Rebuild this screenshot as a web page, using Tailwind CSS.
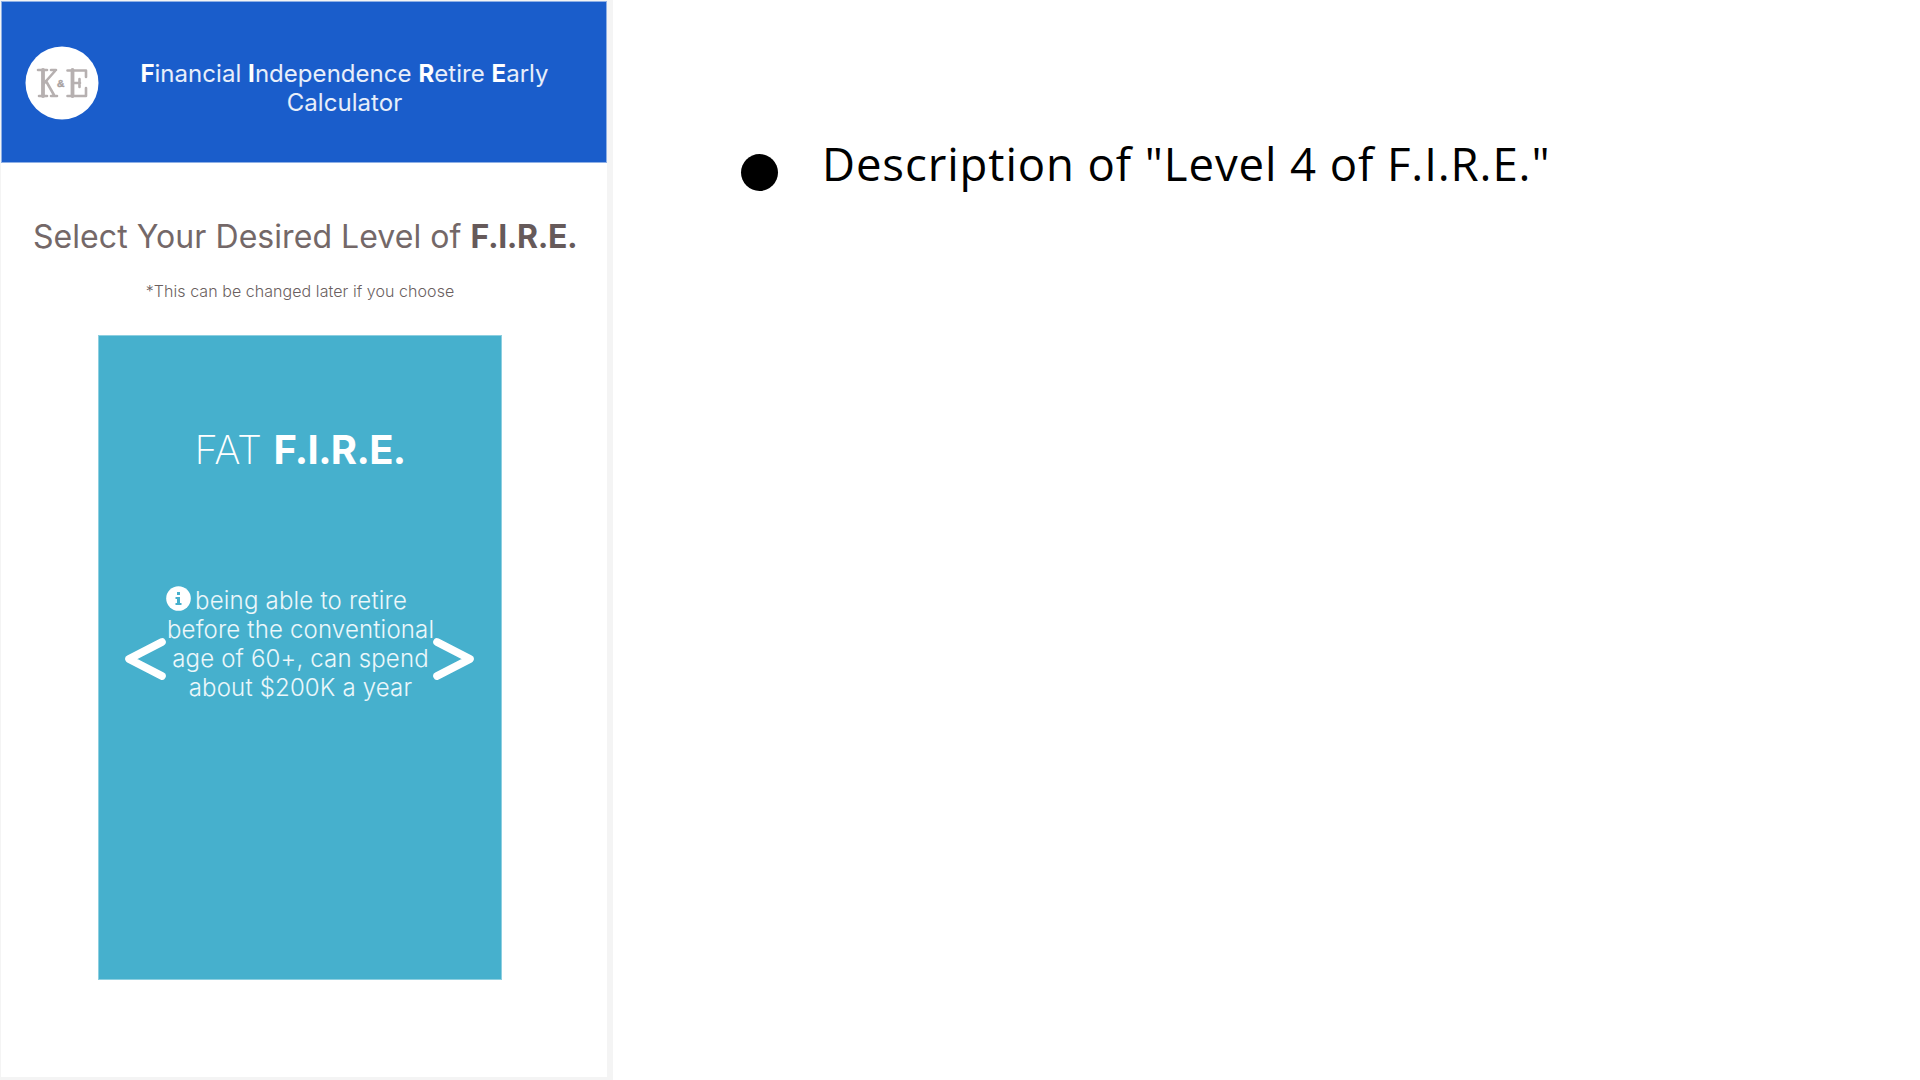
<!DOCTYPE html>
<html lang="en"><head><meta charset="utf-8"><title>Financial Independence Retire Early Calculator</title>
<script src="https://cdn.jsdelivr.net/npm/@tailwindcss/browser@4"></script></head>
<body class="bg-white font-['Inter',sans-serif] h-[1080px] w-[1920px] overflow-hidden flex">
<section class="w-[613px] h-[1080px] shrink-0 bg-[#f4f4f4] pt-px pl-px">
  <div class="w-[606px] h-[1076px] bg-white flex flex-col">
    <header class="h-[162px] shrink-0 bg-[#1a5dcb] border border-[#8fb0e6] flex items-start">
      <svg class="w-[74px] h-[74px] mt-[44px] ml-[23px] shrink-0" viewBox="0 0 74 74">
        <circle cx="37" cy="37" r="36.5" fill="#fff"/>
        <g fill="none" stroke="#b6b0b0" stroke-width="2.6" stroke-linecap="round" stroke-linejoin="round">
          <path stroke-width="3.8" d="M18 24v26M47.500 24v26"/>
          <path d="M13 24h9M14 50h8M26 24h5M26 50h6M30 25L18.500 38M21 35l8 14"/>
          <path d="M42.500 24.500h18.500v6.500M42.500 50h18.500v-8M48 37h7M54.500 33v8"/>
        </g>
        <text x="32.3" y="41.300" font-size="11.5" font-weight="700" fill="#a8a1a1" stroke="#a8a1a1" stroke-width=".4" font-family="Liberation Mono, monospace">&amp;</text>
      </svg>
      <h1 class="mt-[57px] ml-[17px] w-[457px] text-center text-[24px] leading-[29px] tracking-[0.04px] text-white/90 font-normal"><b class="text-white">F</b>inancial <b class="text-white">I</b>ndependence <b class="text-white">R</b>etire <b class="text-white">E</b>arly<br>Calculator</h1>
    </header>
    <h2 class="mt-[54px] ml-[32px] text-[32px] leading-[39px] tracking-[0.06px] text-[#746868] whitespace-nowrap">Select Your Desired Level of <b class="text-[#665a5a] tracking-[-0.4px]">F.I.R.E.</b></h2>
    <p class="mt-[25px] w-[598px] text-center text-[16px] leading-[20px] tracking-[0.06px] font-light text-[#6b5f5f]">*This can be changed later if you choose</p>
    <article class="mt-[34px] ml-[97px] w-[404px] h-[645px] bg-[#46b0cd] border border-[#8dcfe0] text-white flex flex-col items-center">
      <h3 class="mt-[90px] text-[40px] leading-[48px] font-extralight">FAT <b class="font-bold tracking-[-0.65px]">F.I.R.E.</b></h3>
      <div class="mt-[112px] flex text-[24px] leading-[29px] font-light tracking-[0.17px]">
        <svg class="w-[42px] h-[42px] mt-[52px] -ml-px shrink-0" viewBox="0 0 42 42"><path d="M38 4L5 21l33 17" fill="none" stroke="#fff" stroke-width="7.600" stroke-linecap="round" stroke-linejoin="round"/></svg>
        <div class="w-[268px] text-center whitespace-nowrap text-white/90">
          <div class="flex items-start">
            <svg class="w-[25px] h-[25px] shrink-0" viewBox="0 0 25 25"><circle cx="12.5" cy="12.5" r="12.3" fill="#fff"/><path d="M11 6h3v3h-3zM9.5 11H14v6h1.5v2h-6v-2H11v-4H9.500z" fill="#46b0cd"/></svg>
            <span class="ml-[4px] tracking-[0.2px]">being able to retire</span>
          </div>
          <div class="pl-px">before the conventional<br>age of 60+, can spend<br>about $200K a year</div>
        </div>
        <svg class="w-[42px] h-[42px] mt-[52px] -ml-px shrink-0" viewBox="0 0 42 42"><path d="M4 4l33 17-33 17" fill="none" stroke="#fff" stroke-width="7.600" stroke-linecap="round" stroke-linejoin="round"/></svg>
      </div>
    </article>
  </div>
</section>
<main class="pt-[131px] pl-[128px]">
  <div class="flex items-start gap-[44px] text-black">
    <span class="size-[37px] rounded-full bg-black mt-[23px]"></span>
    <p class="font-['Open_Sans',sans-serif] text-[45.5px] leading-[64px] tracking-[0.9px] whitespace-nowrap">Description of "Level 4 of F.I.R.E."</p>
  </div>
</main>
</body></html>
